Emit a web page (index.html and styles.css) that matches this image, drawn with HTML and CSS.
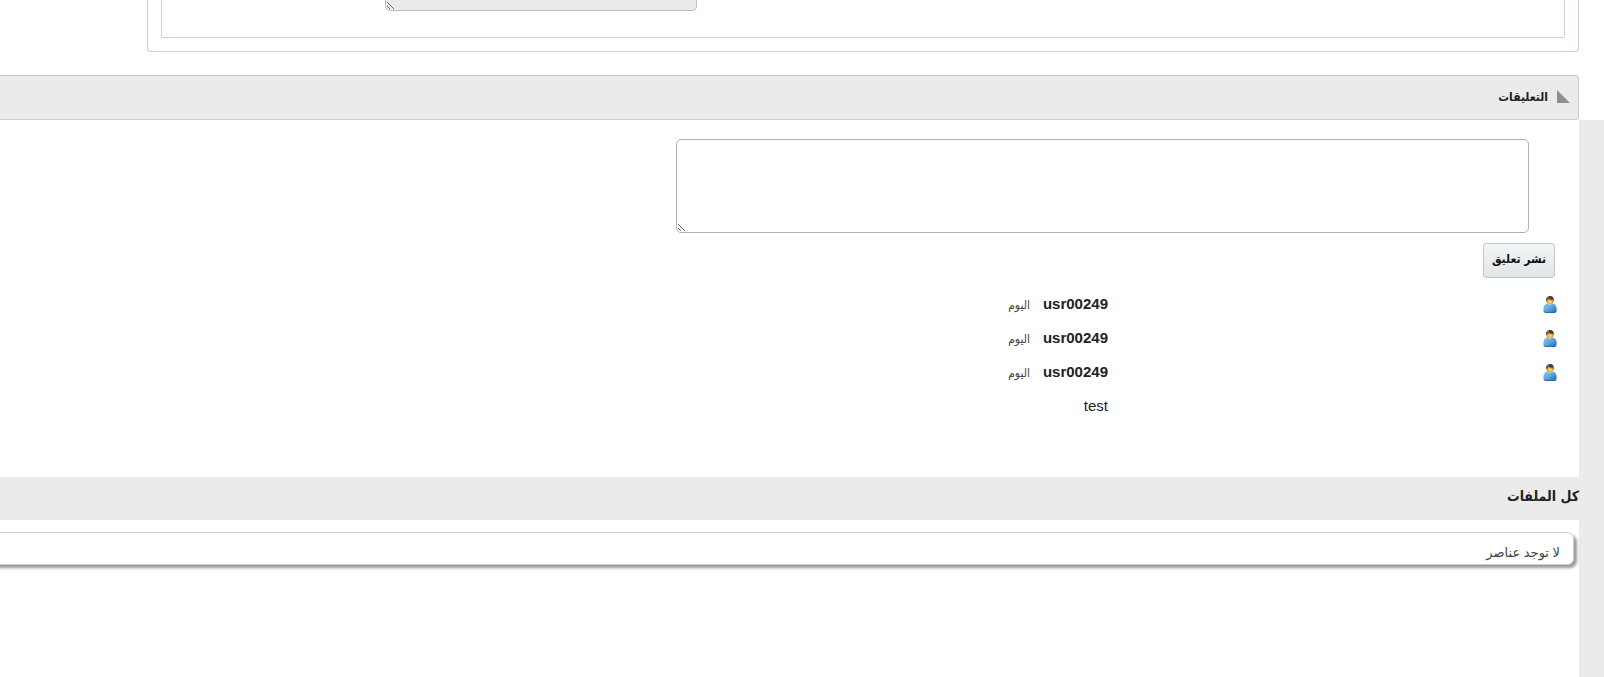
FILE: index.html
```
<!DOCTYPE html>
<html lang="ar" dir="rtl">
<head>
    <meta charset="UTF-8">
    <meta name="viewport" content="width=device-width, initial-scale=1.0">
    <title>التعليقات</title>
    <link rel="stylesheet" href="styles.css">
</head>
<body>
    <div class="marco">
        <div class="marco_interior">
            <textarea class="campo_bloqueado" aria-label="الوصف" readonly></textarea>
        </div>
    </div>
    <header class="barra">
        <svg class="flecha" width="13" height="13" viewBox="0 0 13 13"><path d="M0 0L13 13H0Z" fill="#8b908f"/></svg>
        <h2>التعليقات</h2>
    </header>
    <main>
        <form class="formulario" action="">
            <textarea class="comentario" name="comentario" aria-label="التعليقات"></textarea>
            <button type="button" class="boton">نشر تعليق</button>
        </form>
        <!-- Dibujo del usuario que se repite en cada comentario -->
        <svg class="oculto" width="0" height="0">
            <defs>
                <linearGradient id="cuerpo" x1="0" y1="0" x2="1" y2="1">
                    <stop offset="0" stop-color="#8fcaf2"/>
                    <stop offset="0.5" stop-color="#5aa5df"/>
                    <stop offset="1" stop-color="#1f62ab"/>
                </linearGradient>
            </defs>
            <symbol id="usuario" viewBox="0 0 14 17">
                <path d="M0.500 15C0 11 1 8 4.500 7.500H9.500C13 8 14 11 13.500 15L12 17H2Z" fill="url(#cuerpo)"/>
                <path d="M0.800 15L2 16.600H12L13.300 15" fill="none" stroke="#28639f" stroke-width="0.900"/>
                <path d="M4.500 7.500L7 9L9.500 7.500Z" fill="#d9eefb"/>
                <ellipse cx="7" cy="4.500" rx="3.600" ry="3.800" fill="#d99a2b"/>
                <path d="M5.200 5Q7 3.500 9 5.200L8.500 7.500H5.800Z" fill="#ffd45c"/>
                <path d="M3.200 5.500C2.600 1.500 4.500 0 7 0C9.800 0 11.200 1.800 10.700 5.500L9.600 3.600L7.800 3.800L6 2.600L4.300 3.600Z" fill="#4c3a32"/>
                <path d="M4.300 1.800L6 0.800" stroke="#a69a92" stroke-width="1"/>
            </symbol>
        </svg>
        <ul class="lista">
            <li>
                <svg class="icono" width="14" height="17"><use href="#usuario"/></svg>
                <div class="texto"><b>usr00249</b><span class="fecha">اليوم</span></div>
            </li>
            <li>
                <svg class="icono" width="14" height="17"><use href="#usuario"/></svg>
                <div class="texto"><b>usr00249</b><span class="fecha">اليوم</span></div>
            </li>
            <li>
                <svg class="icono" width="14" height="17"><use href="#usuario"/></svg>
                <div class="texto"><b>usr00249</b><span class="fecha">اليوم</span><p>test</p></div>
            </li>
        </ul>
        <h2 class="ficheros">كل الملفات</h2>
        <div class="vacio">لا توجد عناصر</div>
    </main>
</body>
</html>
```
FILE: styles.css
```
*{
    box-sizing: border-box;
}
body{
    margin: 0;
    min-height: 100vh;
    display: flex;
    flex-direction: column;
    background-color: #ffffff;
    color: #222222;
    font-family: "Liberation Sans", "DejaVu Sans", sans-serif;
    font-size: 15px;
    overflow-x: hidden;
}
h2{
    margin: 0;
    font-family: "DejaVu Sans Condensed", "DejaVu Sans", sans-serif;
    font-size: 12px;
    color: #222222;
}
.marco{
    margin: 0 25px 23px 147px;
    padding: 0 13px 13px;
    border: 1px solid #c8d3e2;
    border-top: 0;
    border-radius: 0 0 4px 4px;
}
.marco_interior{
    padding: 0 867px 26px 0;
    border: 1px solid #c8d3e2;
    border-top: 0;
    border-radius: 0 0 2px 2px;
}
.campo_bloqueado{
    display: block;
    width: 312px;
    height: 11px;
    min-height: 0;
    padding: 0;
    border: 1px solid #bcbcbc;
    border-top: 0;
    border-radius: 0 0 5px 5px;
    background-color: #ebebeb;
}
.barra{
    display: flex;
    align-items: center;
    gap: 9px;
    height: 45px;
    margin-right: 25px;
    padding: 0 8px 2px 0;
    background-color: #ebebeb;
    border: 1px solid #cccccc;
    border-left: 0;
    border-radius: 0 4px 4px 0;
}
main{
    flex: 1;
    border-right: 25px solid #ebebeb;
}
.formulario{
    padding: 19px 24px 0 0;
}
.comentario{
    display: block;
    width: 853px;
    height: 94px;
    margin-right: 26px;
    border: 1px solid #b5b0b5;
    border-radius: 5px;
}
.boton{
    display: block;
    width: 72px;
    height: 35px;
    margin-top: 10px;
    padding: 0 0 3px;
    border: 1px solid #bcc6cc;
    border-radius: 3px;
    background: linear-gradient(#f3f5f7, #e2e5e6);
    color: #111111;
    font: bold 12px "DejaVu Sans Condensed", "DejaVu Sans", sans-serif;
}
.oculto{
    display: block;
}
.lista{
    margin: 0;
    padding: 9px 22px 0 0;
    list-style: none;
}
.lista li{
    display: flex;
    min-height: 34px;
}
.icono{
    margin: 9px 0 0 435px;
}
.texto{
    line-height: 34px;
}
.texto b{
    margin-left: 13px;
}
.texto p{
    margin: 0;
}
.fecha{
    font-family: "DejaVu Sans Condensed", "DejaVu Sans", sans-serif;
    font-size: 12px;
    line-height: 1;
    color: #444444;
}
.ficheros{
    height: 43px;
    margin-top: 54px;
    background-color: #ebebeb;
    font-size: 14px;
    line-height: 38px;
}
.vacio{
    height: 33px;
    margin: 12px 5px 0 -10px;
    padding-right: 13px;
    border: 1px solid #c5d0d0;
    border-radius: 0 7px 7px 0;
    box-shadow: 3px 3px 3px #999999;
    color: #444444;
    font-size: 13px;
    line-height: 40px;
}
```
